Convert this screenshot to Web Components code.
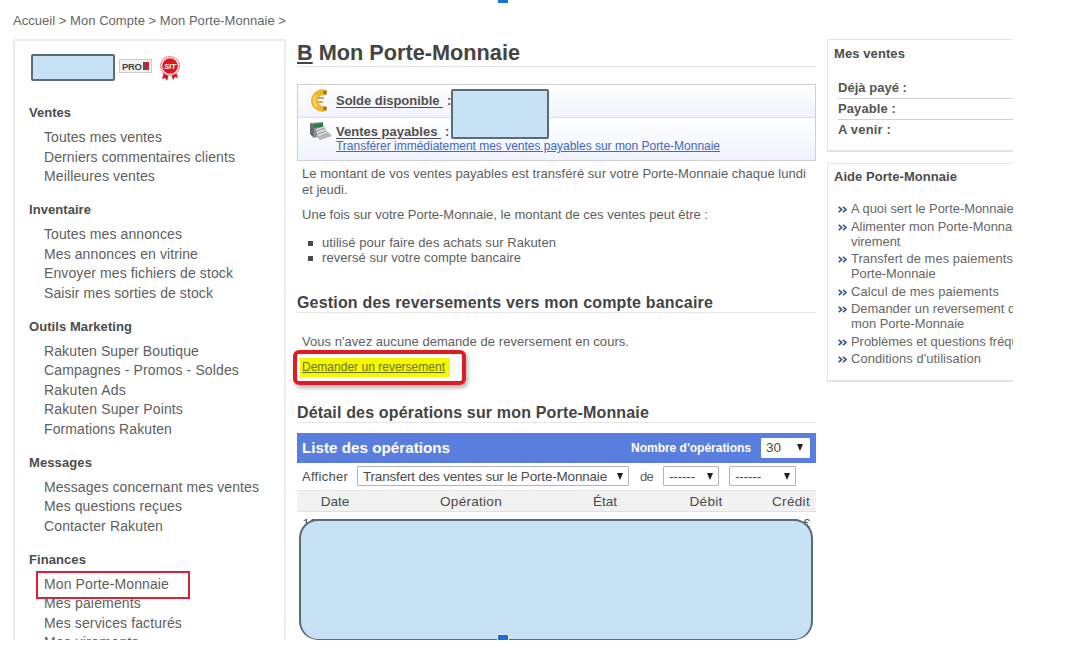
<!DOCTYPE html>
<html lang="fr">
<head>
<meta charset="utf-8">
<title>Mon Porte-Monnaie</title>
<style>
    body {
        margin: 0;
        width: 1080px;
        height: 657px;
        overflow: hidden;
        background: #fff;
        color: #5e5e5e;
        font-family: "Liberation Sans", Arial, sans-serif;
        font-size: 13px;
    }
</style>
</head>
<body>
<wallet-page>
    <crumb-trail slot="crumbs"><fit-line width="273">Accueil &gt; Mon Compte &gt; Mon Porte-Monnaie &gt;</fit-line></crumb-trail>

    <side-menu slot="menu">
        <menu-group>
            <fit-line slot="label" width="42">Ventes</fit-line>
            <menu-link><fit-line width="118">Toutes mes ventes</fit-line></menu-link>
            <menu-link><fit-line width="191">Derniers commentaires clients</fit-line></menu-link>
            <menu-link><fit-line width="111">Meilleures ventes</fit-line></menu-link>
        </menu-group>
        <menu-group>
            <fit-line slot="label" width="62">Inventaire</fit-line>
            <menu-link><fit-line width="138">Toutes mes annonces</fit-line></menu-link>
            <menu-link><fit-line width="154">Mes annonces en vitrine</fit-line></menu-link>
            <menu-link><fit-line width="189">Envoyer mes fichiers de stock</fit-line></menu-link>
            <menu-link><fit-line width="169">Saisir mes sorties de stock</fit-line></menu-link>
        </menu-group>
        <menu-group>
            <fit-line slot="label" width="103">Outils Marketing</fit-line>
            <menu-link><fit-line width="155">Rakuten Super Boutique</fit-line></menu-link>
            <menu-link><fit-line width="195">Campagnes - Promos - Soldes</fit-line></menu-link>
            <menu-link><fit-line width="82">Rakuten Ads</fit-line></menu-link>
            <menu-link><fit-line width="139">Rakuten Super Points</fit-line></menu-link>
            <menu-link><fit-line width="128">Formations Rakuten</fit-line></menu-link>
        </menu-group>
        <menu-group>
            <fit-line slot="label" width="63">Messages</fit-line>
            <menu-link><fit-line width="215">Messages concernant mes ventes</fit-line></menu-link>
            <menu-link><fit-line width="138">Mes questions reçues</fit-line></menu-link>
            <menu-link><fit-line width="119">Contacter Rakuten</fit-line></menu-link>
        </menu-group>
        <menu-group>
            <fit-line slot="label" width="57">Finances</fit-line>
            <menu-link marked><fit-line width="125">Mon Porte-Monnaie</fit-line></menu-link>
            <menu-link><fit-line width="97">Mes paiements</fit-line></menu-link>
            <menu-link><fit-line width="138">Mes services facturés</fit-line></menu-link>
            <menu-link><fit-line width="95">Mes virements</fit-line></menu-link>
        </menu-group>
    </side-menu>

    <wallet-title slot="main" level="1"><fit-line width="223"><u>B</u> Mon Porte-Monnaie</fit-line></wallet-title>
    <balance-panel slot="main"></balance-panel>
    <wallet-intro slot="main"></wallet-intro>
    <wallet-title slot="main" level="2" style="margin-top: 27px"><fit-line width="416">Gestion des reversements vers mon compte bancaire</fit-line></wallet-title>
    <payout-request slot="main">
        <fit-line slot="status" width="327">Vous n'avez aucune demande de reversement en cours.</fit-line>
        <fit-line width="143"><u>Demander un reversement</u></fit-line>
    </payout-request>
    <wallet-title slot="main" level="2" style="margin-top: 18px"><fit-line width="352">Détail des opérations sur mon Porte-Monnaie</fit-line></wallet-title>
    <operations-list slot="main"></operations-list>

    <side-card slot="aside" style="height: 113px">
        <fit-line slot="label" width="71">Mes ventes</fit-line>
        <sales-line><fit-line width="69">Déjà payé :</fit-line></sales-line>
        <sales-line><fit-line width="58">Payable :</fit-line></sales-line>
        <sales-line><fit-line width="53">A venir :</fit-line></sales-line>
    </side-card>
    <side-card slot="aside" style="height: 219px; padding-top: 4px">
        <fit-line slot="label" width="123">Aide Porte-Monnaie</fit-line>
        <help-link>A quoi sert le Porte-Monnaie</help-link>
        <help-link>Alimenter mon Porte-Monnaie<br>virement</help-link>
        <help-link><fit-line width="162">Transfert de mes paiements</fit-line><br>Porte-Monnaie</help-link>
        <help-link><fit-line width="148">Calcul de mes paiements</fit-line></help-link>
        <help-link>Demander un reversement de<br>mon Porte-Monnaie</help-link>
        <help-link>Problèmes et questions fréquentes</help-link>
        <help-link><fit-line width="130">Conditions d'utilisation</fit-line></help-link>
    </side-card>
</wallet-page>

<script>
const define = (name, html, setup) => {
    const template = document.createElement('template');
    template.innerHTML = html;
    window.customElements.define(name, class extends HTMLElement {
        constructor() {
            super();
            this.attachShadow({ mode: 'open' });
            this.shadowRoot.appendChild(template.content.cloneNode(true));
        }

        connectedCallback() {
            if (setup) {
                setup(this);
            }
        }
    });
};

define('wallet-page', `
    <style>
        :host {
            display: grid;
            position: relative;
            box-sizing: border-box;
            width: 1013px;
            height: 640px;
            padding-left: 13px;
            overflow: hidden;
            grid-template-columns: 273px 519px 186px;
            grid-template-rows: 39px 601px;
            column-gap: 11px;
        }
        .crumbs { grid-column: 1 / -1; }
        .main { position: relative; }
        .aside { display: flex; flex-direction: column; gap: 11px; min-width: 0; }
        .handle {
            position: absolute;
            left: 498px;
            width: 10px;
            background: #1a6fdc;
        }
        .top { top: 0; height: 3px; }
        .bottom { bottom: 0; height: 5px; box-shadow: 0 0 0 1px #e4f0fa; z-index: 3; }
    </style>
    <div class="crumbs"><slot name="crumbs"></slot></div>
    <slot name="menu"></slot>
    <div class="main"><slot name="main"></slot></div>
    <div class="aside"><slot name="aside"></slot></div>
    <i class="handle top"></i>
    <i class="handle bottom"></i>
`);

define('crumb-trail', `
    <style>
        :host { display: block; height: 39px; line-height: 41px; color: #666; }
    </style>
    <slot></slot>
`);

// Flat blue rectangle that hides private data
define('mask-box', `
    <style>
        :host {
            display: block;
            box-sizing: border-box;
            background: #c8e2f5;
            border: 2px solid #5c6a75;
            border-radius: 2px;
        }
    </style>
`);

define('seller-badges', `
    <style>
        :host { display: flex; align-items: flex-start; height: 27px; }
        mask-box { width: 84px; height: 27px; }
        .pro {
            display: flex;
            align-items: center;
            box-sizing: border-box;
            width: 33px;
            height: 14px;
            margin: 5px 0 0 4px;
            padding-left: 2px;
            border: 1px solid #ccc;
            background: #f2f2f2;
            color: #444;
            font-size: 9.5px;
            font-weight: 700;
            letter-spacing: -0.3px;
        }
        .pro i { width: 2px; height: 8px; background: #555; margin-left: 1px; }
        .pro i + i { width: 4px; background: #c8202c; margin-left: 0; }
        svg { margin: 1px 0 0 7px; }
    </style>
    <mask-box></mask-box>
    <span class="pro">PRO<i></i><i></i></span>
    <svg width="22" height="27" viewBox="0 0 22 27">
        <path d="M5 17 L3 24 L6 23 L8 26 L10 19 Z M17 17 L19 23 L16 22 L14 25 L12 19 Z" fill="#cf1420"/>
        <circle cx="11" cy="11" r="9.3" fill="#fff" stroke="#ea7c84" stroke-width="1.4" stroke-dasharray="2 0.6"/>
        <circle cx="11" cy="11" r="7.8" fill="#dd1722"/>
        <text x="11" y="13.8" text-anchor="middle" font-size="7.8" font-weight="700" font-style="italic" fill="#fff">SIT</text>
    </svg>
`);

define('side-menu', `
    <style>
        :host {
            display: block;
            box-sizing: border-box;
            height: 620px;
            padding: 13px 0 0 14px;
            border: 2px solid #ebebeb;
            font-size: 14px;
        }
        seller-badges { margin: 0 0 22.4px 2px; }
    </style>
    <seller-badges></seller-badges>
    <slot></slot>
`);

define('menu-group', `
    <style>
        :host { display: block; margin-bottom: 13.5px; line-height: 19.5px; }
        .label { height: 19.5px; font-size: 13px; font-weight: 700; color: #4c4c4c; margin-bottom: 5.5px; }
        .links { padding-left: 15px; }
    </style>
    <div class="label"><slot name="label"></slot></div>
    <div class="links"><slot></slot></div>
`);

define('menu-link', `
    <style>
        :host { display: block; position: relative; height: 19.5px; }
        :host([marked])::after {
            content: '';
            position: absolute;
            left: -8px;
            top: -4px;
            box-sizing: border-box;
            width: 154px;
            height: 28px;
            border: 2.5px solid #df1f33;
        }
    </style>
    <slot></slot>
`);

define('wallet-title', `
    <style>
        :host {
            display: block;
            border-bottom: 1px solid #e6e6e6;
            font-weight: 700;
            color: #444;
        }
        :host([level="1"]) { height: 27px; line-height: 27px; font-size: 21.7px; margin-bottom: 17px; }
        :host([level="2"]) { height: 19px; line-height: 19px; font-size: 16px; }
    </style>
    <slot></slot>
`);

define('balance-panel', `
    <style>
        :host {
            display: block;
            position: relative;
            box-sizing: border-box;
            height: 77px;
            border: 1px solid #cfcfcf;
        }
        .row {
            display: flex;
            box-sizing: border-box;
            padding-left: 11px;
            background: linear-gradient(#fff, #f0f3fd);
        }
        .first { height: 33px; border-bottom: 1px solid #dde0e8; }
        .second { height: 42px; }
        svg { flex: none; width: 27px; }
        b { display: flex; height: 15px; line-height: 15px; color: #505050; }
        u { text-underline-offset: 2px; }
        .link { display: block; line-height: 15px; font-size: 12px; color: #4068c4; }
        .link u { text-underline-offset: 1px; }
        mask-box { position: absolute; left: 153px; top: 4px; width: 98px; height: 50px; }
    </style>
    <div class="row first">
        <svg height="30" viewBox="0 0 27 30">
            <path d="M18 6 C15 3 9 4 5 8 C1 13 1 19 5 23 C9 27 15 28 18 25 L17 21 C13 22 10 20 9 17 C8 13 10 10 17 10 Z" fill="#efb52c"/>
            <path d="M7 10 C4 14 5 19 8 22" fill="none" stroke="#f9d979" stroke-width="2"/>
            <path d="M9 13 H15 M9 17 H14" stroke="#c98b1a" stroke-width="1.6"/>
            <circle cx="16" cy="7.5" r="2" fill="#a9741b"/>
            <circle cx="16" cy="23.5" r="2" fill="#a9741b"/>
        </svg>
        <b style="margin-top: 8px"><fit-line width="107"><u>Solde disponible&nbsp;</u></fit-line><span style="margin-left: 4px">:</span></b>
    </div>
    <div class="row second">
        <svg height="30" viewBox="0 0 27 30">
            <path d="M1 5 L14 4 L15 16 L6 20 L1 16 Z" fill="#8d9496"/>
            <path d="M4 6 L14 5 L14 9 L4 10 Z" fill="#2f7a4c"/>
            <path d="M1 5 L5 8 V20 L1 16 Z" fill="#686e70"/>
            <path d="M7 11 L16 8 L19 15 L9 19 Z" fill="#dadddd"/>
            <path d="M8 19 L19 14 L23 18 L11 22 Z" fill="#b3b7b8"/>
            <path d="M8 13 L16 10 M9 16 L17 13" stroke="#8e9394"/>
        </svg>
        <div style="margin-top: 6px">
            <b><fit-line width="105"><u>Ventes payables&nbsp;</u></fit-line><span style="margin-left: 4px">:</span></b>
            <span class="link"><fit-line width="384"><u>Transférer immédiatement mes ventes payables sur mon Porte-Monnaie</u></fit-line></span>
        </div>
    </div>
    <mask-box></mask-box>
`);

define('wallet-intro', `
    <style>
        :host { display: block; padding: 5px 0 0 5px; line-height: 15.5px; }
        p { margin: 0 0 10px; }
        ul { margin: 12px 0 0; padding: 0; list-style: none; }
        li { display: flex; align-items: center; gap: 9px; padding-left: 6px; height: 15.5px; }
        li::before { content: ''; width: 5px; height: 5px; margin-top: 2px; background: #4a4a4a; }
    </style>
    <p><fit-line width="504">Le montant de vos ventes payables est transféré sur votre Porte-Monnaie chaque lundi</fit-line><br>et jeudi.</p>
    <p><fit-line width="406">Une fois sur votre Porte-Monnaie, le montant de ces ventes peut être :</fit-line></p>
    <ul>
        <li><fit-line width="234">utilisé pour faire des achats sur Rakuten</fit-line></li>
        <li><fit-line width="199">reversé sur votre compte bancaire</fit-line></li>
    </ul>
`);

define('payout-request', `
    <style>
        :host { display: block; padding-top: 21px; }
        .status { height: 16px; line-height: 16px; padding-left: 5px; }
        .frame {
            position: relative;
            display: flex;
            align-items: center;
            box-sizing: border-box;
            width: 173px;
            height: 35px;
            margin-left: -4px;
            padding: 0 0 0 3px;
            border: 4px solid #df1c22;
            border-radius: 6px;
            box-shadow: 2px 3px 4px rgba(0, 0, 0, 0.3);
        }
        .mark {
            box-sizing: border-box;
            width: 150px;
            height: 19px;
            padding-left: 2px;
            line-height: 19px;
            font-size: 12px;
            background: #f5f800;
            color: #6a7410;
        }
    </style>
    <div class="status"><slot name="status"></slot></div>
    <div class="frame"><span class="mark"><slot></slot></span></div>
`);

define('drop-down', `
    <style>
        :host {
            display: flex;
            align-items: center;
            justify-content: space-between;
            box-sizing: border-box;
            height: 20px;
            padding: 0 5px;
            border: 1px solid #b4b4b4;
            border-radius: 1px;
            background: #fff;
            color: #4c4c4c;
            font-size: 13.5px;
            white-space: nowrap;
        }
        i {
            border: 3.5px solid transparent;
            border-top: 7px solid #222;
            border-bottom: 0;
        }
    </style>
    <slot></slot><i></i>
`);

define('operations-list', `
    <style>
        :host { display: block; position: relative; margin-top: 10px; }
        .bar {
            display: flex;
            align-items: center;
            box-sizing: border-box;
            height: 30px;
            padding: 0 6px 0 5px;
            background: #5a7edd;
            color: #fff;
            font-weight: 700;
        }
        .bar .name { flex: 1; font-size: 15.2px; }
        .bar .count { font-size: 12px; margin-right: 10px; }
        .bar drop-down { width: 49px; border: 0; padding-right: 7px; font-weight: 400; }
        .filters { display: flex; align-items: center; height: 27px; padding-left: 5px; }
        .filters span { color: #4c4c4c; }
        .columns {
            display: grid;
            grid-template-columns: 76px 196px 72px 130px 45px;
            justify-items: center;
            color: #4a4a4a;
        }
        .columns > :last-child { justify-self: end; padding-right: 6px; }
        .head {
            box-sizing: border-box;
            height: 22px;
            line-height: 21px;
            font-size: 13.6px;
            background: #f2f2f2;
            border-top: 1px solid #e9e9e9;
            border-bottom: 1px solid #e0e0e0;
        }
        .entry { height: 20px; padding-top: 4px; line-height: 15px; white-space: nowrap; }
        mask-box { position: absolute; left: 2px; top: 86px; width: 514px; height: 121px; border-radius: 19px; border-bottom-width: 1px; }
    </style>
    <div class="bar">
        <span class="name"><fit-line width="148">Liste des opérations</fit-line></span>
        <span class="count"><fit-line width="120">Nombre d'opérations</fit-line></span>
        <drop-down>30</drop-down>
    </div>
    <div class="filters">
        <span><fit-line width="46">Afficher</fit-line></span>
        <drop-down style="width: 272px; margin: 0 11px 0 9px"><fit-line width="244">Transfert des ventes sur le Porte-Monnaie</fit-line></drop-down>
        <fit-line width="13">de</fit-line>
        <drop-down style="width: 56px; margin: 0 10px 0 10px"><fit-line width="26">------</fit-line></drop-down>
        <drop-down style="width: 67px"><fit-line width="26">------</fit-line></drop-down>
    </div>
    <div class="columns head">
        <span>Date</span><fit-line width="62">Opération</fit-line><span>État</span><fit-line width="33">Débit</fit-line><span><fit-line width="38">Crédit</fit-line></span>
    </div>
    <div class="columns entry">
        <span>10/07/2019</span><span>Transfert</span><span>Terminé</span><span></span><span>101,50 €</span>
    </div>
    <mask-box></mask-box>
`);

define('side-card', `
    <style>
        :host {
            display: block;
            box-sizing: border-box;
            padding: 5px 0 0 6px;
            border: 1px solid #e4e4e4;
            border-width: 1px 0 2px 1px;
            overflow: hidden;
        }
        .label { height: 17px; line-height: 17px; font-weight: 700; color: #4c4c4c; }
        .content { padding: 16px 0 0 4px; }
    </style>
    <div class="label"><slot name="label"></slot></div>
    <div class="content"><slot></slot></div>
`);

define('sales-line', `
    <style>
        :host {
            display: block;
            height: 20px;
            line-height: 20px;
            font-weight: 700;
            color: #555;
            border-bottom: 1px solid #d2d2d2;
        }
        :host(:last-child) { border: 0; }
    </style>
    <slot></slot>
`);

define('help-link', `
    <style>
        :host {
            display: flex;
            position: relative;
            margin-bottom: 2.5px;
            line-height: 15px;
            font-size: 12.9px;
            white-space: nowrap;
            color: #666;
        }
        svg { flex: none; margin: 5px 4px 0 0; }
    </style>
    <svg width="9" height="7" viewBox="0 0 9 7">
        <path d="M0.7 0.8 L3.7 3.5 L0.7 6.2 M5 0.8 L8 3.5 L5 6.2" fill="none" stroke="#2d5591" stroke-width="1.6"/>
    </svg>
    <span><slot></slot></span>
`);

// Spreads its letters so that the line is as wide as its width attribute.
// Defined last: it measures with the fonts that its parents have set.
define('fit-line', `
    <style>
        :host { display: inline-block; white-space: nowrap; vertical-align: top; }
    </style>
    <slot></slot>
`, (el) => {
    const target = +el.getAttribute('width');
    const natural = el.getBoundingClientRect().width;
    el.style.letterSpacing = `${((target - natural) / el.textContent.length).toFixed(3)}px`;
});
</script>
</body>
</html>
